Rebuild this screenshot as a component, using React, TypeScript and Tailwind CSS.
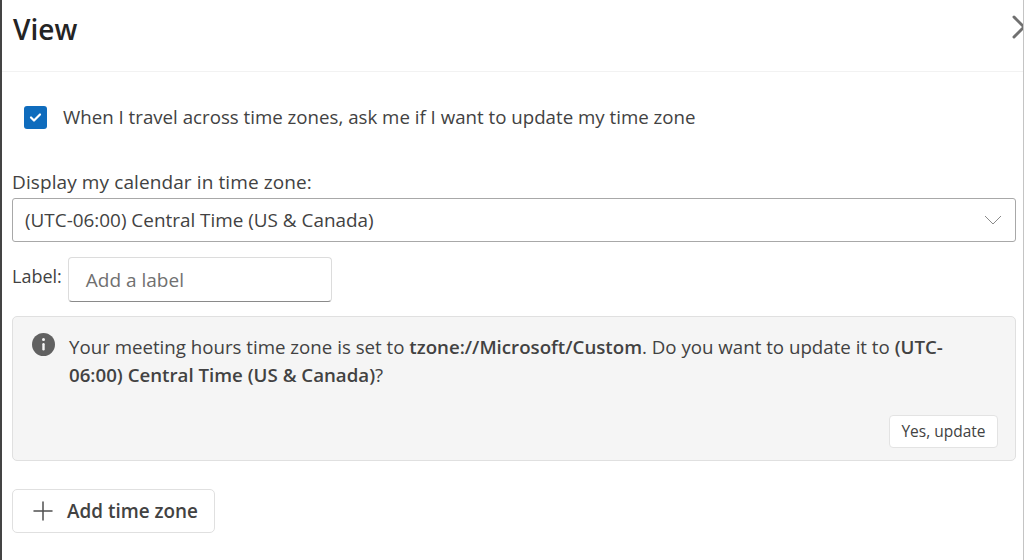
const App = () => {
    return (
        <div className="h-[560px] w-[1024px] overflow-hidden bg-white border-l-2 border-r border-l-[#444444] border-r-[#c4c4c4] text-[#424242] font-['Open_Sans','Liberation_Sans',sans-serif]">
            {/* Header */}
            <div className="h-[72px] flex justify-between border-b border-[#f2f2f2] overflow-hidden">
                <h1 className="ml-[11px] mt-[10px] text-[28px] leading-[38px] font-semibold text-[#242424]">View</h1>
                <svg width="14" height="26" viewBox="0 0 14 26" className="mt-[14px] -mr-[3px] shrink-0" fill="none" stroke="#707070" strokeWidth="3" strokeLinecap="round">
                    <path d="M2 3 L12 13 L2 23" />
                </svg>
            </div>

            <div className="pl-[10px] pr-[7px]">
                {/* Travel checkbox */}
                <div className="mt-[33px] ml-[12px] flex items-center gap-[16px]">
                    <div className="w-[23px] h-[23px] rounded-[3px] bg-[#0f6cbd] flex items-center justify-center">
                        <svg width="13" height="11" viewBox="0 0 13 11" fill="none" stroke="white" strokeWidth="2.2" strokeLinecap="round" strokeLinejoin="round">
                            <path d="M2 5.5 L5 8.5 L11 2.5" />
                        </svg>
                    </div>
                    <span className="text-[18.7px] leading-[26px] -mt-[1px]">When I travel across time zones, ask me if I want to update my time zone</span>
                </div>

                {/* Calendar time zone */}
                <div className="mt-[39px] text-[19px] leading-[26px] tracking-[0.1px]">Display my calendar in time zone:</div>
                <div className="mt-[3px] h-[44px] flex items-center justify-between rounded-[3px] border border-[#a8a8a8] pl-[12px] pr-[13px]">
                    <span className="text-[18.9px] pt-[1px]">(UTC-06:00) Central Time (US &amp; Canada)</span>
                    <svg width="18" height="10" viewBox="0 0 18 10" fill="none" stroke="#8a8a8a" strokeWidth="1">
                        <path d="M1 1 L9 9 L17 1" />
                    </svg>
                </div>

                {/* Label */}
                <div className="mt-[15px] flex items-start gap-[6px]">
                    <span className="text-[18px] leading-[24px] mt-[7px]">Label:</span>
                    <div className="w-[264px] h-[45px] flex items-center rounded-[4px] border border-[#dcdcdc] border-b-[#8a8a8a] pl-[17px] pt-[1px] text-[19px] text-[#707070]">
                        Add a label
                    </div>
                </div>

                {/* Info bar */}
                <div className="mt-[14px] h-[145px] rounded-[5px] border border-[#e0e0e0] bg-[#f5f5f5] flex flex-col">
                    <div className="flex items-start pl-[19px] pr-[38px] pt-[16px]">
                        <svg width="23" height="23" viewBox="0 0 23 23" className="shrink-0">
                            <circle cx="11.5" cy="11.5" r="11.5" fill="#616161" />
                            <circle cx="11.5" cy="6.5" r="1.5" fill="#f5f5f5" />
                            <rect x="10.3" y="10" width="2.4" height="7.5" rx="1.2" fill="#f5f5f5" />
                        </svg>
                        <p className="ml-[14px] text-[18.7px] leading-[28px]">
                            Your meeting hours time zone is set to <b className="font-semibold">tzone://Microsoft/Custom</b>. Do you want to update it to <b className="font-semibold">(UTC-06:00) Central Time (US &amp; Canada)</b>?
                        </p>
                    </div>
                    <div className="mt-auto mb-[12px] mr-[17px] flex justify-end">
                        <button className="w-[109px] h-[33px] rounded-[4px] bg-white border border-[#e3e3e3] text-[15.5px]">Yes, update</button>
                    </div>
                </div>

                {/* Add time zone */}
                <button className="mt-[28px] w-[203px] h-[44px] rounded-[5px] border border-[#e0e0e0] bg-white flex items-center pl-[20px] gap-[14px]">
                    <svg width="20" height="20" viewBox="0 0 20 20" fill="none" stroke="#505050" strokeWidth="1.5" strokeLinecap="round">
                        <path d="M10 1 V19 M1 10 H19" />
                    </svg>
                    <span className="text-[18.9px] font-semibold">Add time zone</span>
                </button>
            </div>
        </div>
    )
}

export default App
